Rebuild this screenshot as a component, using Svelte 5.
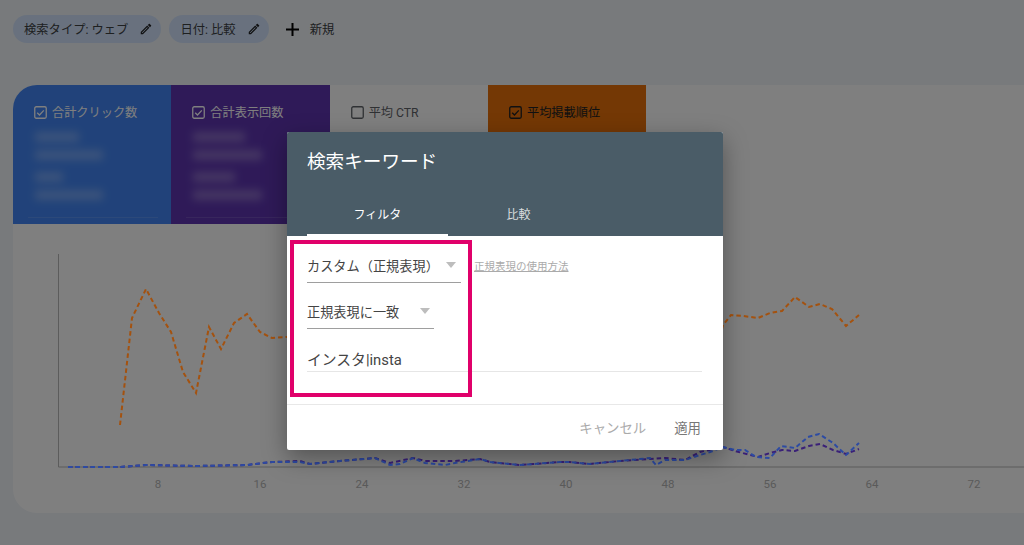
<script>
  const editPath = "M14.060 9.020l.92.92L5.920 19H5v-.92l9.060-9.060M17.660 3c-.25 0-.51.1-.7.29l-1.830 1.830 3.750 3.750 1.830-1.830c.39-.39.39-1.020 0-1.410l-2.340-2.340c-.2-.2-.45-.29-.71-.29zm-3.600 3.190L3 17.250V21h3.750L17.810 9.940l-3.750-3.750z"

  const chips = ["検索タイプ: ウェブ", "日付: 比較"]

  const metrics = [
    { name: "合計クリック数", kind: "blue", checked: true, bars: [44, 68, 28, 68] },
    { name: "合計表示回数", kind: "purple", checked: true, bars: [52, 69, 42, 69] },
    { name: "平均 CTR", kind: "plain", checked: false, bars: [] },
    { name: "平均掲載順位", kind: "orange", checked: true, bars: [] }
  ]

  const ticks = [8, 16, 24, 32, 40, 48, 56, 64, 72]
  const tickX = n => 158 + (n - 8) * 12.75

  const orange = "120,425 132,318 146,289 159,313 171,332 183,372 196,393 209,327 221,349 234,323 247,314 260,332 272,338 286,337 300,337 720,337 723,325 731,315 743,316 758,318 770,313 782,311 795,297 809,307 820,304 832,309 846,326 859,315"
  const blue = "68,467 120,467 146,465 196,466 247,465 272,462 300,462 310,464 340,461 375,458 390,465 400,464 413,458 425,463 445,465 455,463 480,459 490,462 520,465 560,462 570,462 590,464 620,461 650,458 656,465 665,460 685,460 700,455 710,452 723,447 735,450 745,450 756,457 770,458 781,446 795,448 808,437 819,434 833,443 846,455 859,443"
  const purple = "68,467 120,467 146,465 196,466 247,465 272,462 300,461 310,464 340,461 375,458 390,463 413,458 425,461 455,461 480,459 490,462 520,465 560,462 570,462 590,464 620,461 650,459 665,458 685,460 700,452 723,447 735,451 758,457 770,453 782,450 795,451 809,446 820,444 833,450 846,454 859,449"
</script>

<div class="page">
  <div class="chips">
    {#each chips as chip}
      <div class="chip">
        <span>{chip}</span>
        <svg width="14" height="14" viewBox="0 0 24 24"><path d={editPath} /></svg>
      </div>
    {/each}
    <div class="add">
      <svg width="15" height="15" viewBox="0 0 15 15"><path d="M6.500 1h2v5.500H14v2H8.500V14h-2V8.500H1v-2h5.500z" /></svg>
      <span>新規</span>
    </div>
  </div>

  <div class="card">
    <div class="metrics">
      {#each metrics as m}
        <div class="metric {m.kind}">
          <div class="metric-name">
            <svg class="box" width="13" height="13" viewBox="0 0 13 13">
              <rect x="0.75" y="0.75" width="11.5" height="11.500" rx="1.5" />
              {#if m.checked}<path d="M3.200 6.700l2.300 2.300 4.300-4.600" />{/if}
            </svg>
            <span>{m.name}</span>
          </div>
          {#if m.bars.length}
            <div class="smudges">
              {#each m.bars as w}
                <i style="width: {w}px"></i>
              {/each}
            </div>
            <div class="rule"></div>
          {/if}
        </div>
      {/each}
    </div>

    <svg class="chart" width="1027" height="289" viewBox="13 224 1027 289">
      <path class="axis" d="M58.500 254V467H1040" />
      <polyline class="line" stroke="#a4520f" points={orange} />
      <polyline class="line" stroke="#3a2078" points={purple} />
      <polyline class="line" stroke="#2d4ba3" points={blue} />
      {#each ticks as t}
        <text x={tickX(t)} y="488" text-anchor="middle">{t}</text>
      {/each}
    </svg>
  </div>

  <div class="scrim"></div>

  <div class="dialog">
    <div class="dialog-head">
      <div class="title">検索キーワード</div>
      <div class="tabs">
        <div class="tab active">フィルタ</div>
        <div class="tab">比較</div>
      </div>
    </div>

    <div class="dialog-body">
      <div class="row">
        <div class="select wide">
          <span>カスタム（正規表現）</span>
          <b class="arrow"></b>
        </div>
        <span class="help">正規表現の使用方法</span>
      </div>
      <div class="select narrow">
        <span>正規表現に一致</span>
        <b class="arrow"></b>
      </div>
      <div class="input">インスタ|insta</div>
    </div>

    <div class="dialog-foot">
      <span class="cancel">キャンセル</span>
      <span class="apply">適用</span>
    </div>

    <div class="highlight"></div>
  </div>
</div>

<style>
  :global(body) {
    margin: 0;
    overflow: hidden;
  }

  .page {
    position: relative;
    width: 1024px;
    height: 545px;
    overflow: hidden;
    padding-top: 15px;
    box-sizing: border-box;
    background: #f0f4f9;
    font-family: Roboto, "Noto Sans CJK JP", sans-serif;
    color: #3c4043;
  }

  .chips {
    display: flex;
    align-items: center;
    gap: 8px;
    height: 28px;
    margin-left: 13px;
    font-size: 12.300px;
  }

  .chip {
    display: flex;
    align-items: center;
    gap: 11px;
    height: 28px;
    padding: 0 8px 0 11px;
    border-radius: 14px;
    background: #d2e3fc;
  }

  .chip path {
    fill: #202124;
  }

  .add {
    display: flex;
    align-items: center;
    gap: 10px;
    margin-left: 8px;
  }

  .add path {
    fill: #000;
  }

  .card {
    width: 1040px;
    margin: 42px 0 0 13px;
    border-radius: 24px;
    overflow: hidden;
    background: #fff;
    height: 428px;
  }

  .metrics {
    display: flex;
    height: 139px;
  }

  .metric {
    box-sizing: border-box;
    width: 158.330px;
    padding: 19px 21px 0;
    font-size: 12.200px;
    color: #fff;
  }

  .blue { background: #4285f4; }
  .purple { background: #5e35b1; }
  .orange { background: #e8710a; color: #202124; }
  .plain { color: #5f6368; }

  .metric-name {
    display: flex;
    align-items: center;
    gap: 5px;
    height: 16px;
  }

  .box rect, .box path {
    fill: none;
    stroke: currentColor;
    stroke-width: 1.300;
  }

  .smudges {
    display: flex;
    flex-direction: column;
    margin: 12px 0 0 1px;
    filter: blur(4px);
    opacity: 0.28;
  }

  .smudges i {
    display: block;
    height: 10px;
    margin-bottom: 8px;
    background: #fff;
  }

  .smudges i:nth-child(2) {
    margin-bottom: 12px;
  }

  .rule {
    height: 1px;
    margin: 9px -8px 0 -6px;
    background: rgba(255, 255, 255, 0.12);
  }

  /* lines stay bright over the scrim */
  .chart {
    display: block;
    position: relative;
    z-index: 1;
  }

  .axis {
    fill: none;
    stroke: #5c5c5c;
    stroke-width: 1;
  }

  .line {
    fill: none;
    stroke-width: 2;
    stroke-dasharray: 4.500 3;
  }

  .chart text {
    font-size: 11.500px;
    fill: #5a5a5a;
  }

  .scrim {
    position: absolute;
    inset: 0;
    background: rgba(0, 0, 0, 0.5);
  }

  .dialog {
    position: absolute;
    z-index: 2;
    left: 287px;
    top: 132px;
    width: 436px;
    height: 318px;
    display: flex;
    flex-direction: column;
    border-radius: 2px;
    background: #fff;
    box-shadow: 0 8px 24px rgba(0, 0, 0, 0.35);
  }

  .dialog-head {
    height: 104px;
    box-sizing: border-box;
    padding: 17px 20px 0;
    background: #4a5c67;
    color: #fff;
    display: flex;
    flex-direction: column;
    justify-content: space-between;
    border-radius: 2px 2px 0 0;
  }

  .title {
    font-size: 18.600px;
    line-height: 26px;
  }

  .tabs {
    display: flex;
  }

  .tab {
    width: 141px;
    height: 38px;
    box-sizing: border-box;
    padding-top: 8px;
    text-align: center;
    font-size: 12px;
    line-height: 18px;
    color: rgba(255, 255, 255, 0.8);
  }

  .tab.active {
    color: #fff;
    border-bottom: 2px solid #fff;
  }

  .dialog-body {
    flex: 1;
    padding: 0 21px 0 20px;
    border-bottom: 1px solid #e8e8e8;
    display: flex;
    flex-direction: column;
    font-size: 13.200px;
    color: #444;
  }

  .row {
    display: flex;
    align-items: flex-start;
    gap: 13px;
    margin-top: 14px;
  }

  .select {
    display: flex;
    align-items: center;
    justify-content: space-between;
    height: 33px;
    box-sizing: border-box;
    padding: 0 5px 2px 0;
    border-bottom: 1px solid #9e9e9e;
  }

  .wide { width: 154px; }
  .narrow { width: 127px; margin-top: 13px; padding-right: 4px; }

  .arrow {
    width: 0;
    height: 0;
    border-left: 5.500px solid transparent;
    border-right: 5.500px solid transparent;
    border-top: 6px solid #bdbdbd;
  }

  .help {
    font-size: 10.500px;
    line-height: 33px;
    color: #aaa;
    text-decoration: underline;
  }

  .input {
    margin: 13px 0 0;
    height: 29px;
    line-height: 36px;
    font-size: 14.800px;
    color: #444;
    border-bottom: 1px solid #e6e6e6;
  }

  .dialog-foot {
    height: 45px;
    box-sizing: border-box;
    display: flex;
    justify-content: flex-end;
    align-items: center;
    gap: 28px;
    padding: 0 22px 2px 0;
    font-size: 13.400px;
  }

  .cancel { color: #aaa; }
  .apply { color: #777; }

  .highlight {
    position: absolute;
    left: 3px;
    top: 108px;
    width: 182px;
    height: 157px;
    box-sizing: border-box;
    border: 4px solid #e0006a;
  }
</style>
